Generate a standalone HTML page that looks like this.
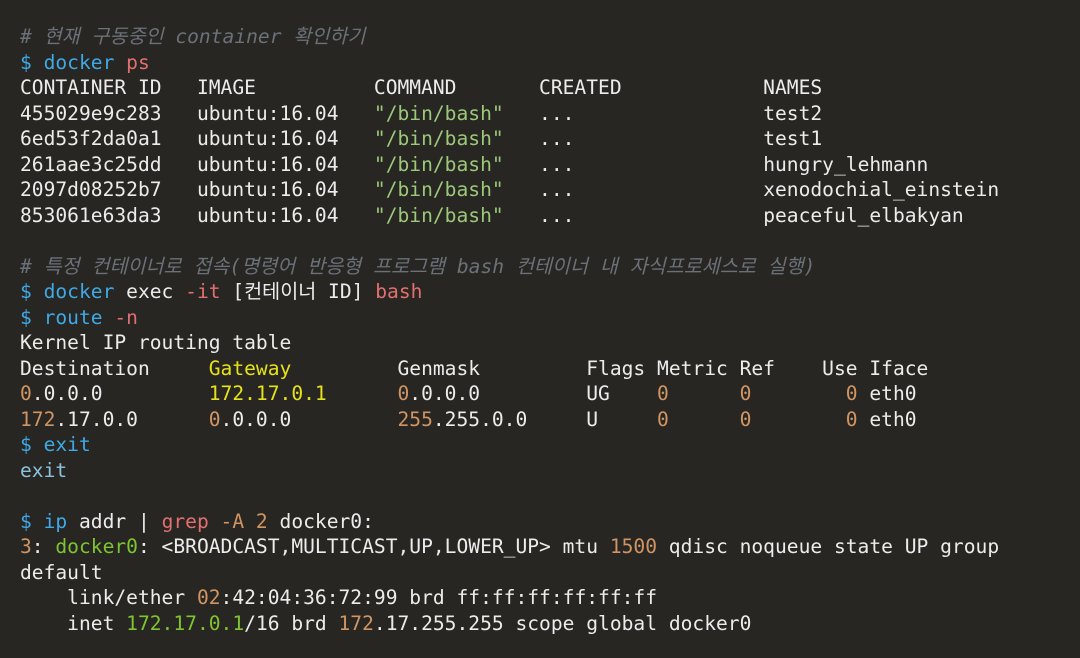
<!DOCTYPE html>
<html><head><meta charset="utf-8"><style>
html,body{margin:0;padding:0;background:#272622;width:1080px;height:658px;overflow:hidden}
pre{margin:0;position:absolute;left:20px;top:24px;font-family:"DejaVu Sans Mono","Noto Sans CJK KR",monospace;font-size:19.6px;line-height:25.5px;color:#ececec;white-space:pre}
.c{color:#6b7079;font-style:italic}
.b{color:#3fa9e6}
.r{color:#e3706f}
.g{color:#9cc87a}
.o{color:#d09563}
.y{color:#e6e219}
.l{color:#8cc3dc}
.G{color:#7ec531}
</style></head><body><pre><span class="c"># 현재 구동중인 container 확인하기</span>
<span class="b">$ docker</span> <span class="r">ps</span>
CONTAINER ID   IMAGE          COMMAND       CREATED            NAMES
455029e9c283   ubuntu:16.04   <span class="g">"/bin/bash"</span>   ...                test2
6ed53f2da0a1   ubuntu:16.04   <span class="g">"/bin/bash"</span>   ...                test1
261aae3c25dd   ubuntu:16.04   <span class="g">"/bin/bash"</span>   ...                hungry_lehmann
2097d08252b7   ubuntu:16.04   <span class="g">"/bin/bash"</span>   ...                xenodochial_einstein
853061e63da3   ubuntu:16.04   <span class="g">"/bin/bash"</span>   ...                peaceful_elbakyan

<span class="c"># 특정 컨테이너로 접속(명령어 반응형 프로그램 bash 컨테이너 내 자식프로세스로 실행)</span>
<span class="b">$ docker</span> exec <span class="r">-it</span> [컨테이너 ID] <span class="r">bash</span>
<span class="b">$ route</span> <span class="r">-n</span>
Kernel IP routing table
Destination     <span class="y">Gateway</span>         Genmask         Flags Metric Ref    Use Iface
<span class="o">0</span>.0.0.0         <span class="y">172.17.0.1</span>      <span class="o">0</span>.0.0.0         UG    <span class="o">0</span>      <span class="o">0</span>        <span class="o">0</span> eth0
<span class="o">172</span>.17.0.0      <span class="o">0</span>.0.0.0         <span class="o">255</span>.255.0.0     U     <span class="o">0</span>      <span class="o">0</span>        <span class="o">0</span> eth0
<span class="b">$ exit</span>
<span class="l">exit</span>

<span class="b">$ ip</span> addr | <span class="r">grep</span> <span class="o">-A 2</span> docker0:
<span class="o">3</span>: <span class="G">docker0</span>: &lt;BROADCAST,MULTICAST,UP,LOWER_UP&gt; mtu <span class="o">1500</span> qdisc noqueue state UP group
default
    link/ether <span class="o">02</span>:42:04:36:72:99 brd ff:ff:ff:ff:ff:ff
    inet <span class="G">172.17.0.1</span>/16 brd <span class="o">172</span>.17.255.255 scope global docker0</pre></body></html>
